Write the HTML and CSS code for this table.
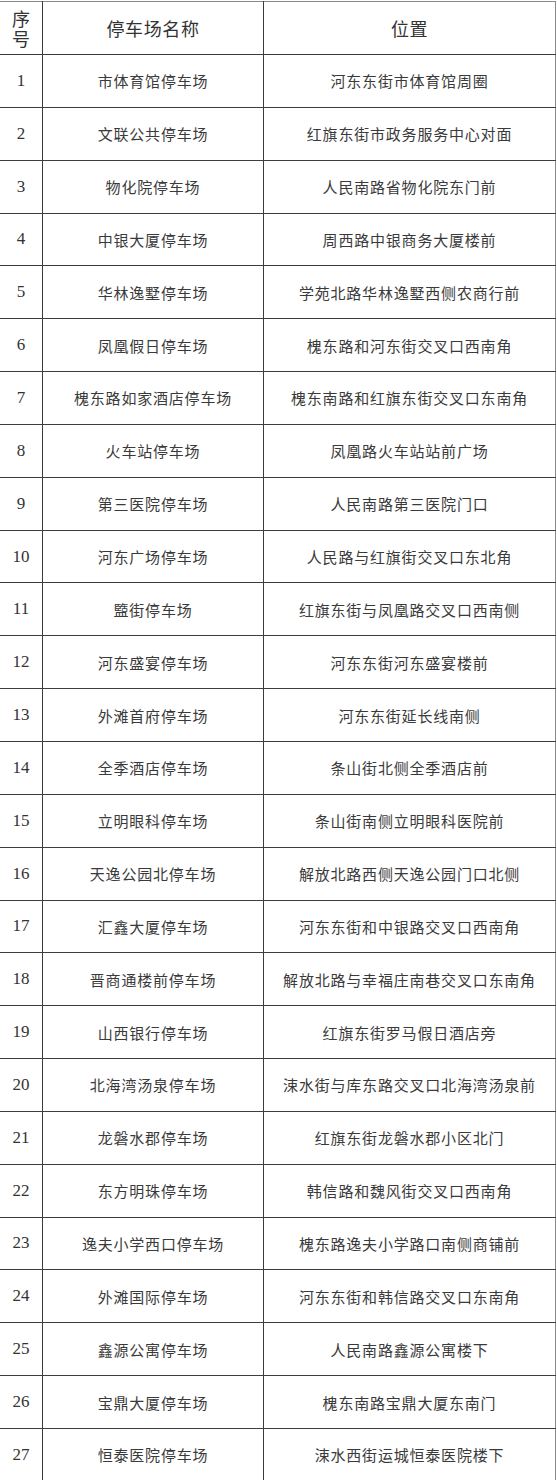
FILE: index.html
```html
<!DOCTYPE html>
<html lang="zh-CN">
<head>
<meta charset="utf-8">
<title>停车场</title>
<link rel="stylesheet" href="styles.css">
</head>
<body>
<table class="lots">
  <colgroup>
    <col class="c-no">
    <col class="c-name">
    <col class="c-pos">
  </colgroup>
  <thead>
    <tr class="head">
      <th class="no">序号</th>
      <th>停车场名称</th>
      <th>位置</th>
    </tr>
  </thead>
  <tbody>
    <tr><td class="no">1</td><td>市体育馆停车场</td><td>河东东街市体育馆周圈</td></tr>
    <tr><td class="no">2</td><td>文联公共停车场</td><td>红旗东街市政务服务中心对面</td></tr>
    <tr><td class="no">3</td><td>物化院停车场</td><td>人民南路省物化院东门前</td></tr>
    <tr><td class="no">4</td><td>中银大厦停车场</td><td>周西路中银商务大厦楼前</td></tr>
    <tr><td class="no">5</td><td>华林逸墅停车场</td><td>学苑北路华林逸墅西侧农商行前</td></tr>
    <tr><td class="no">6</td><td>凤凰假日停车场</td><td>槐东路和河东街交叉口西南角</td></tr>
    <tr><td class="no">7</td><td>槐东路如家酒店停车场</td><td>槐东南路和红旗东街交叉口东南角</td></tr>
    <tr><td class="no">8</td><td>火车站停车场</td><td>凤凰路火车站站前广场</td></tr>
    <tr><td class="no">9</td><td>第三医院停车场</td><td>人民南路第三医院门口</td></tr>
    <tr><td class="no">10</td><td>河东广场停车场</td><td>人民路与红旗街交叉口东北角</td></tr>
    <tr><td class="no">11</td><td>盬街停车场</td><td>红旗东街与凤凰路交叉口西南侧</td></tr>
    <tr><td class="no">12</td><td>河东盛宴停车场</td><td>河东东街河东盛宴楼前</td></tr>
    <tr><td class="no">13</td><td>外滩首府停车场</td><td>河东东街延长线南侧</td></tr>
    <tr><td class="no">14</td><td>全季酒店停车场</td><td>条山街北侧全季酒店前</td></tr>
    <tr><td class="no">15</td><td>立明眼科停车场</td><td>条山街南侧立明眼科医院前</td></tr>
    <tr><td class="no">16</td><td>天逸公园北停车场</td><td>解放北路西侧天逸公园门口北侧</td></tr>
    <tr><td class="no">17</td><td>汇鑫大厦停车场</td><td>河东东街和中银路交叉口西南角</td></tr>
    <tr><td class="no">18</td><td>晋商通楼前停车场</td><td>解放北路与幸福庄南巷交叉口东南角</td></tr>
    <tr><td class="no">19</td><td>山西银行停车场</td><td>红旗东街罗马假日酒店旁</td></tr>
    <tr><td class="no">20</td><td>北海湾汤泉停车场</td><td>涑水街与库东路交叉口北海湾汤泉前</td></tr>
    <tr><td class="no">21</td><td>龙磐水郡停车场</td><td>红旗东街龙磐水郡小区北门</td></tr>
    <tr><td class="no">22</td><td>东方明珠停车场</td><td>韩信路和魏风街交叉口西南角</td></tr>
    <tr><td class="no">23</td><td>逸夫小学西口停车场</td><td>槐东路逸夫小学路口南侧商铺前</td></tr>
    <tr><td class="no">24</td><td>外滩国际停车场</td><td>河东东街和韩信路交叉口东南角</td></tr>
    <tr><td class="no">25</td><td>鑫源公寓停车场</td><td>人民南路鑫源公寓楼下</td></tr>
    <tr><td class="no">26</td><td>宝鼎大厦停车场</td><td>槐东南路宝鼎大厦东南门</td></tr>
    <tr><td class="no">27</td><td>恒泰医院停车场</td><td>涑水西街运城恒泰医院楼下</td></tr>
  </tbody>
</table>
</body>
</html>
```

FILE: styles.css
```css
html, body {
  margin: 0;
  padding: 0;
  background: #ffffff;
}

body {
  padding-top: 1px;
  font-family: "Noto Sans CJK SC", sans-serif;
  color: #3a3a3a;
}

.lots {
  border-collapse: collapse;
  table-layout: fixed;
  width: 556px;
  margin-left: -1px;
}

.c-no { width: 43px; }
.c-name { width: 221px; }
.c-pos { width: 292px; }

.lots th,
.lots td {
  border: 1px solid #3c3c3c;
  padding: 0;
  text-align: center;
  vertical-align: middle;
  font-weight: normal;
}

.lots tr:first-child th {
  border-top-color: #8a8a8a;
}

.lots th:last-child,
.lots td:last-child {
  border-right-color: #8a8a8a;
}

.lots th:first-child,
.lots td:first-child {
  border-left-color: #ffffff;
}

.head th {
  height: 52px;
  font-size: 18px;
  line-height: 20px;
  color: #333;
  letter-spacing: 0.6px;
}

.head th.no {
  padding: 0 11px;
  letter-spacing: 0;
}

.lots td {
  height: 51.85px;
  font-size: 15px;
  letter-spacing: 0.8px;
  color: #3a3a3a;
}

.lots td.no {
  font-family: "Liberation Serif", serif;
  font-size: 17px;
  letter-spacing: 0;
  color: #333;
}
```
